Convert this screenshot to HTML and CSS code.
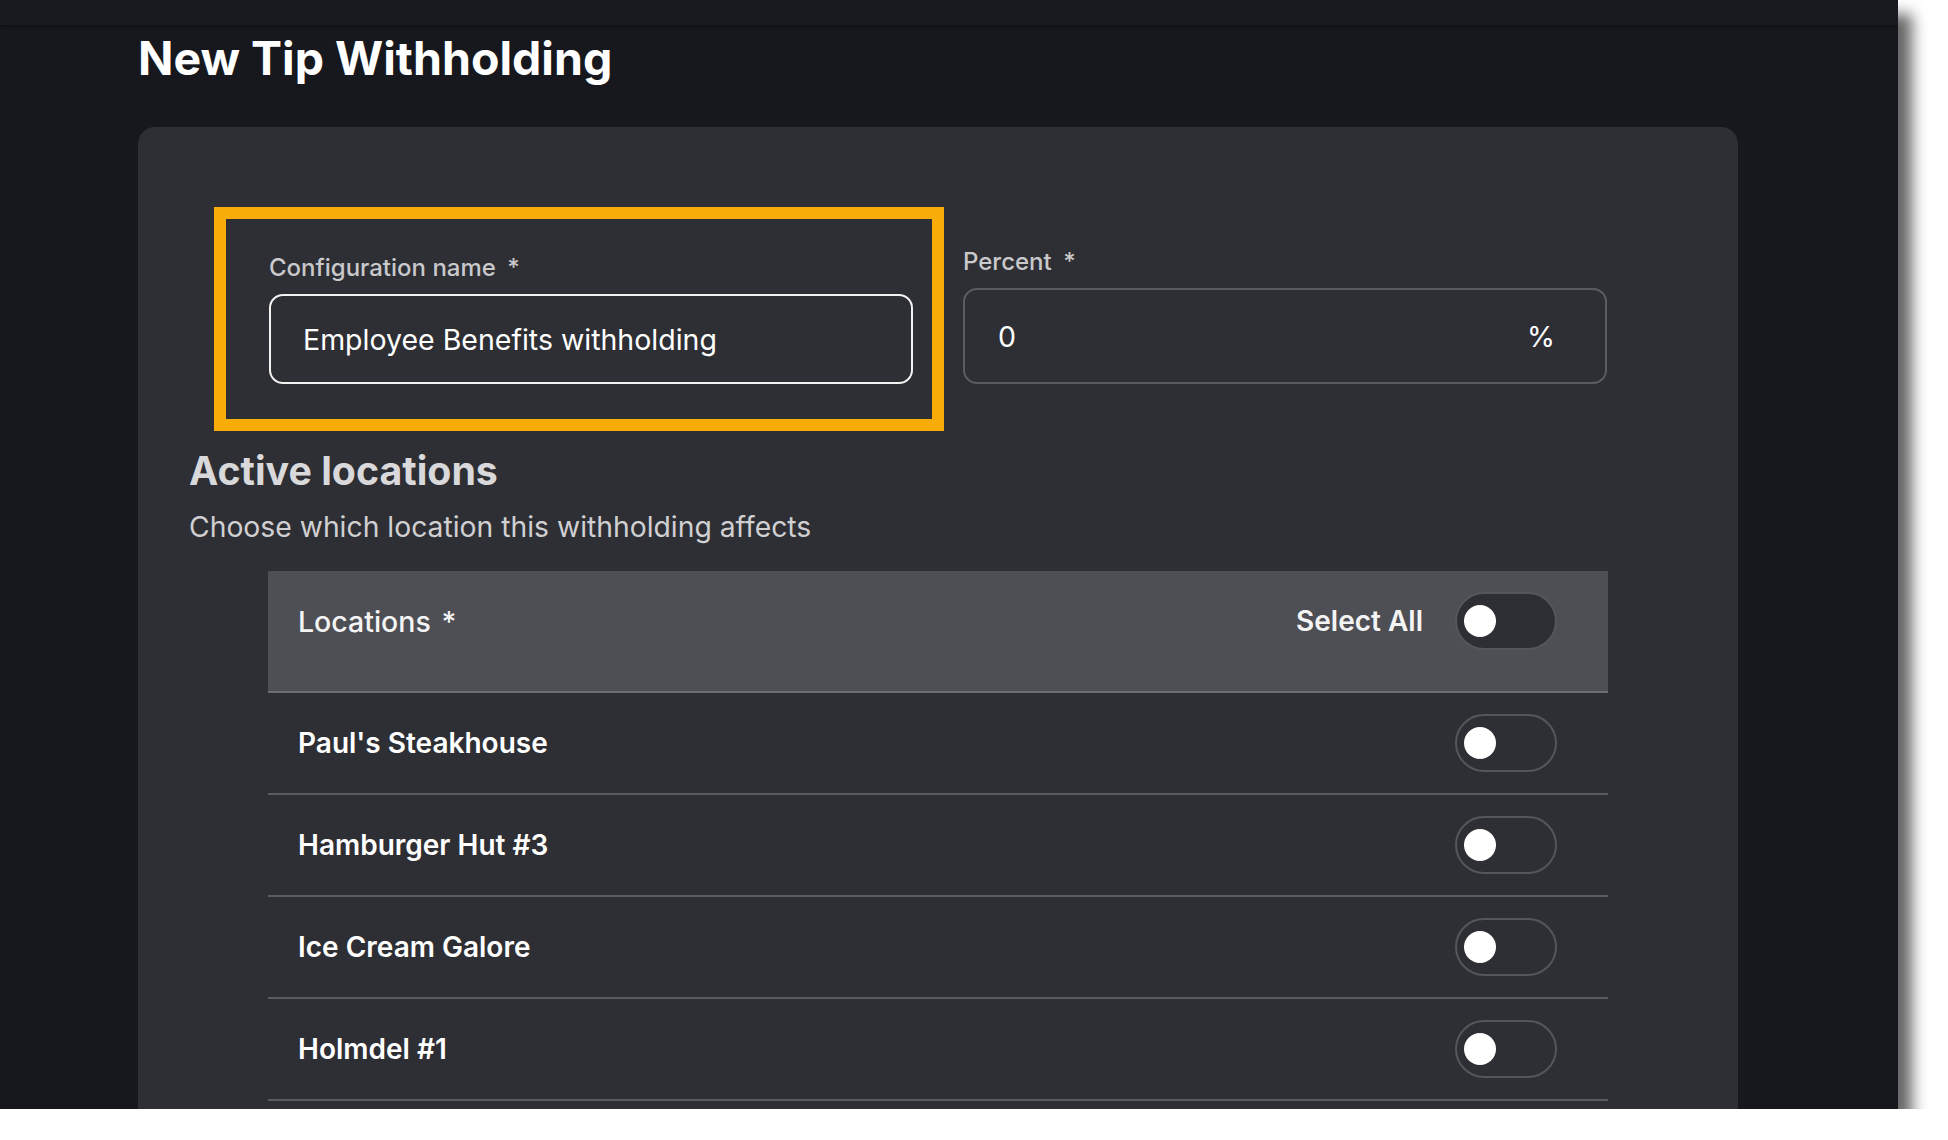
FILE: index.html
```html
<!DOCTYPE html>
<html>
  <head>
    <title>New Tip Withholding</title>
    <link rel="stylesheet" href="styles.css">
  </head>
  <body>
    <div class="window">
      <div class="top-bar"></div>
      <h1 class="page-title">New Tip Withholding</h1>

      <div class="card">
        <div class="form-row">
          <div class="highlight">
            <div class="field">
              <label class="field-label">Configuration name <span class="req">*</span></label>
              <div class="text-input name-input">Employee Benefits withholding</div>
            </div>
          </div>
          <div class="field percent-field">
            <label class="field-label">Percent <span class="req">*</span></label>
            <div class="text-input percent-input">
              <span>0</span>
              <span>%</span>
            </div>
          </div>
        </div>

        <div class="section-head">
          <h2>Active locations</h2>
          <p>Choose which location this withholding affects</p>
        </div>

        <div class="locations">
          <div class="loc-header">
            <span class="loc-title">Locations <span class="req-bold">*</span></span>
            <div class="select-all">
              <span>Select All</span>
              <div class="toggle"><div class="knob"></div></div>
            </div>
          </div>
          <div class="loc-row">
            <span>Paul's Steakhouse</span>
            <div class="toggle"><div class="knob"></div></div>
          </div>
          <div class="loc-row">
            <span>Hamburger Hut #3</span>
            <div class="toggle"><div class="knob"></div></div>
          </div>
          <div class="loc-row">
            <span>Ice Cream Galore</span>
            <div class="toggle"><div class="knob"></div></div>
          </div>
          <div class="loc-row">
            <span>Holmdel #1</span>
            <div class="toggle"><div class="knob"></div></div>
          </div>
        </div>
      </div>
    </div>
  </body>
</html>
```

FILE: styles.css
```css
body {
  margin: 0;
  background-color: white;
  font-family: Inter, "Noto Sans", sans-serif;
}

.window {
  width: 1898px;
  height: 1109px;
  background-color: #16181d;
  overflow: hidden;
  box-shadow: 14px 14px 14px rgba(0, 0, 0, 0.6);
}

.top-bar {
  height: 25px;
  background-color: #181a1f;
  border-bottom: 1px solid #0e1013;
  box-shadow: 0 1px 3px rgba(0, 0, 0, 0.4);
}

.page-title {
  margin: 4px 0 0 138px;
  font-size: 46.5px;
  font-weight: 700;
  line-height: 57px;
  color: white;
}

.card {
  margin: 40px 0 0 138px;
  width: 1600px;
  height: 1000px;
  box-sizing: border-box;
  padding: 80px 130px 0 130px;
  background-color: #2e2f34;
  border-radius: 17px 17px 0 0;
}

.form-row {
  display: flex;
  align-items: flex-start;
}

.highlight {
  margin-left: -54px;
  border: 12px solid #f8ac07;
  padding: 34px 19px 35px 43px;
}

.field {
  width: 644px;
}

.field-label {
  display: block;
  margin-bottom: 12px;
  font-size: 24px;
  font-weight: 500;
  line-height: 29px;
  color: #c9c9cb;
}

.req {
  margin-left: 5px;
}

.text-input {
  display: flex;
  align-items: center;
  box-sizing: border-box;
  border-radius: 14px;
  font-size: 28.5px;
  color: white;
}

.name-input {
  height: 90px;
  padding-left: 32px;
  border: 2px solid #f2f2f2;
}

.percent-field {
  margin-left: 19px;
  margin-top: 40px;
}

.percent-input {
  height: 96px;
  justify-content: space-between;
  padding: 0 50px 0 33px;
  border: 2px solid #5b5c60;
}

.section-head {
  margin: 17px 0 0 -79px;
}

.section-head h2 {
  margin: 0;
  font-size: 39.3px;
  font-weight: 700;
  line-height: 46px;
  color: #d9d9db;
}

.section-head p {
  margin: 17px 0 0 0;
  font-size: 28.3px;
  line-height: 33px;
  color: #d0d0d2;
}

.locations {
  margin-top: 27px;
}

.loc-header {
  display: flex;
  justify-content: space-between;
  align-items: center;
  padding: 21px 51px 41px 30px;
  background-color: #4e4f54;
  border-bottom: 2px solid #6c6d71;
  font-size: 28px;
  color: #f4f4f5;
}

.loc-title {
  font-size: 28.5px;
  font-weight: 500;
}

.req-bold {
  margin-left: 3px;
}

.select-all {
  display: flex;
  align-items: center;
  gap: 32px;
  font-weight: 600;
}

.toggle {
  display: flex;
  align-items: center;
  box-sizing: border-box;
  width: 102px;
  height: 58px;
  padding-left: 7px;
  border: 2px solid #55565a;
  border-radius: 29px;
  background-color: #2e2f34;
}

.knob {
  width: 32px;
  height: 32px;
  border-radius: 50%;
  background-color: white;
}

.loc-row {
  display: flex;
  justify-content: space-between;
  align-items: center;
  height: 100px;
  padding: 0 51px 0 30px;
  border-bottom: 2px solid #5a5b5f;
  font-size: 28px;
  font-weight: 600;
  color: white;
}
```
